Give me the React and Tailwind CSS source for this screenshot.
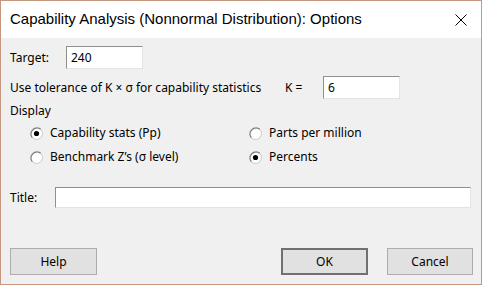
import React from "react";

const font = { fontFamily: '"Liberation Sans", Arial, sans-serif' };
const body = { fontFamily: '"Noto Sans", "Liberation Sans", Arial, sans-serif' };

function Radio({ checked, label }) {
  return (
    <div className="flex items-center">
      <svg width="13" height="13" viewBox="0 0 13 13" className="shrink-0">
        <circle cx="6.5" cy="6.5" r="6" fill="#ffffff" stroke="#c8c8c8" strokeWidth="1" />
        <path d="M2.3 10.7 A6 6 0 0 1 10.7 2.3" fill="none" stroke="#7a7a7a" strokeWidth="1.2" />
        {checked && <circle cx="6.5" cy="6.5" r="2.6" fill="#000000" />}
      </svg>
      <span className="ml-[7px] text-[12px] text-black leading-none">{label}</span>
    </div>
  );
}

function Input({ className, value }) {
  return (
    <div
      className={
        "h-full bg-white border border-t-[#8f8f8f] border-l-[#8f8f8f] border-r-[#e3e3e3] border-b-[#e3e3e3] flex items-center pl-[4px] text-[12px] text-black " +
        className
      }
    >
      {value}
    </div>
  );
}

export default function App() {
  return (
    <div
      className="w-[482px] h-[285px] border border-[#c4977e] bg-[#f0f0f0] flex flex-col box-border"
      style={font}
    >
      <div className="h-[37px] bg-white flex items-center justify-between pl-[9px] pr-[14px] shrink-0">
        <span className="text-[15px] text-black">Capability Analysis (Nonnormal Distribution): Options</span>
        <svg width="12" height="12" viewBox="0 0 12 12">
          <path d="M0.5 0.5 L11.5 11.5 M11.5 0.5 L0.5 11.5" stroke="#000" strokeWidth="1" />
        </svg>
      </div>
      <div className="flex flex-col pl-[9px] pr-[10px] text-[12px] text-black" style={body}>
        <div className="mt-[8px] h-[23px] flex items-center">
          <span className="w-[56px]">Target:</span>
          <Input className="w-[77px]" value="240" />
        </div>
        <div className="mt-[7px] h-[23px] flex items-center">
          <span className="w-[275px]">Use tolerance of K × σ for capability statistics</span>
          <span className="w-[38px]">K =</span>
          <Input className="w-[77px]" value="6" />
        </div>
        <div className="mt-[4px] h-[16px] flex items-center">Display</div>
        <div className="mt-[2px] grid grid-cols-[219px_1fr] pl-[20px]">
          <div className="h-[24px] flex items-center">
            <Radio checked label="Capability stats (Pp)" />
          </div>
          <div className="h-[24px] flex items-center">
            <Radio label="Parts per million" />
          </div>
          <div className="h-[24px] flex items-center">
            <Radio label="Benchmark Z’s (σ level)" />
          </div>
          <div className="h-[24px] flex items-center">
            <Radio checked label="Percents" />
          </div>
        </div>
        <div className="mt-[18px] h-[21px] flex items-center">
          <span className="w-[45px]">Title:</span>
          <Input className="w-[416px]" value="" />
        </div>
        <div className="mt-[40px] h-[27px] flex items-stretch">
          <button className="w-[87px] bg-[#e1e1e1] border border-[#adadad] text-[12px] text-black">Help</button>
          <div className="flex-1" />
          <button className="w-[87px] bg-[#e1e1e1] border-2 border-[#707070] text-[12px] text-black">OK</button>
          <button className="ml-[19px] w-[86px] mr-[-2px] bg-[#e1e1e1] border border-[#adadad] text-[12px] text-black">Cancel</button>
        </div>
      </div>
    </div>
  );
}
